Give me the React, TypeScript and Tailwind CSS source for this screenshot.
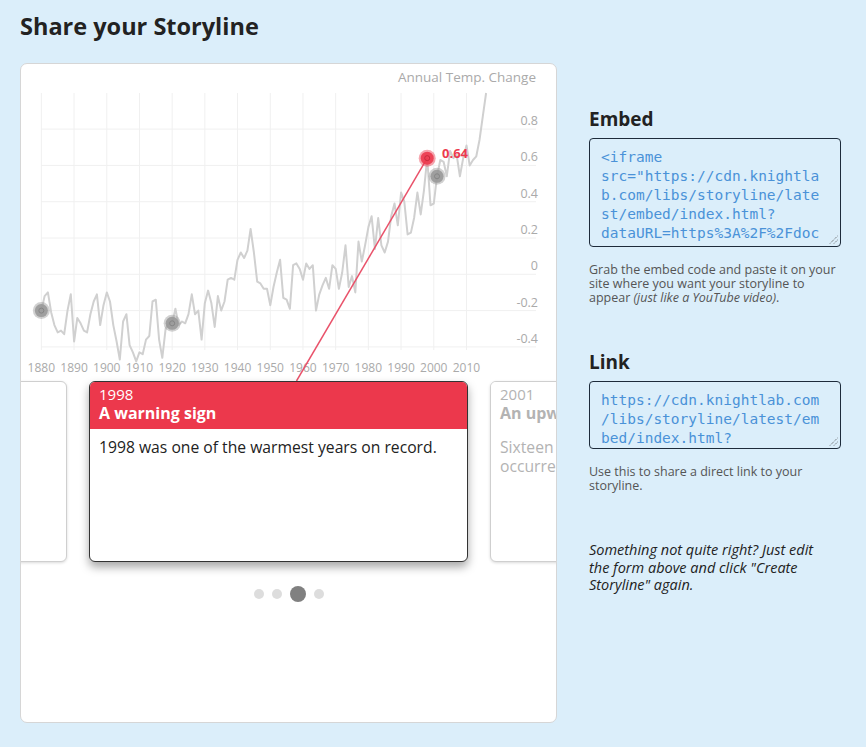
const temps = [
  -0.2, -0.12, -0.1, -0.21, -0.28, -0.32, -0.31, -0.33, -0.2, -0.11,
  -0.37, -0.24, -0.27, -0.31, -0.32, -0.22, -0.15, -0.11, -0.28, -0.17,
  -0.1, -0.15, -0.28, -0.37, -0.47, -0.26, -0.22, -0.39, -0.43, -0.48,
  -0.43, -0.44, -0.36, -0.34, -0.15, -0.14, -0.36, -0.46, -0.3, -0.27,
  -0.27, -0.19, -0.28, -0.26, -0.27, -0.22, -0.11, -0.22, -0.2, -0.36,
  -0.16, -0.09, -0.16, -0.29, -0.12, -0.2, -0.15, -0.03, -0.02, -0.03,
  0.08, 0.12, 0.09, 0.13, 0.25, 0.12, -0.04, -0.05, -0.08, -0.08,
  -0.17, -0.07, 0.01, 0.08, -0.13, -0.14, -0.19, 0.05, 0.06, 0.03,
  -0.03, 0.06, 0.03, 0.05, -0.2, -0.11, -0.06, -0.02, -0.08, 0.05,
  0.03, -0.08, 0.01, 0.16, -0.07, -0.01, -0.1, 0.18, 0.07, 0.16,
  0.26, 0.32, 0.14, 0.31, 0.16, 0.12, 0.18, 0.32, 0.39, 0.27,
  0.45, 0.4, 0.22, 0.23, 0.31, 0.45, 0.33, 0.46, 0.64, 0.38,
  0.39, 0.54, 0.63, 0.62, 0.54, 0.68, 0.64, 0.66, 0.54, 0.64,
  0.71, 0.6, 0.63, 0.65, 0.74, 0.87, 1.0,
];

// chart coords are in page pixels, shifted back by the panel origin
const X = (year: number) => 41.35 + (year - 1880) * 3.27;
const Y = (v: number) => 274.3 - v * 181.5;

const decades = [1880, 1890, 1900, 1910, 1920, 1930, 1940, 1950, 1960, 1970, 1980, 1990, 2000, 2010];
const ticks = [0.8, 0.6, 0.4, 0.2, 0, -0.2, -0.4];

function Marker({ x, y, red }: { x: number; y: number; red?: boolean }) {
  const c = red ? "#ec3a4e" : "#999999";
  return (
    <g>
      <circle cx={x} cy={y} r={8.5} fill={c} opacity={0.45} />
      <circle cx={x} cy={y} r={6.5} fill={c} opacity={0.9} />
      <circle cx={x} cy={y} r={2.5} fill="none" stroke={red ? "#c9293c" : "#858585"} strokeWidth={1} />
    </g>
  );
}

function Chart() {
  const pts = temps
    .map((v, i) => `${X(1880 + i).toFixed(1)},${Math.max(Y(v), 93).toFixed(1)}`)
    .join(" ");
  return (
    <svg width="535" height="317" className="block" style={{ fontFamily: "'Open Sans', sans-serif" }}>
      <g transform="translate(-21,-64)">
        {ticks.map((t) => (
          <line key={t} x1={41} x2={536} y1={Y(t)} y2={Y(t)} stroke="#f0f0f0" strokeWidth={1} />
        ))}
        {decades.map((d) => (
          <line key={d} x1={X(d)} x2={X(d)} y1={93} y2={350} stroke="#f0f0f0" strokeWidth={1} />
        ))}
        <text x={536} y={81.5} textAnchor="end" fontSize="13.5" fill="#aaaaaa">
          Annual Temp. Change
        </text>
        {ticks.map((t) => (
          <text key={t} x={538} y={Y(t) - 4} textAnchor="end" fontSize="12.5" fill="#aaaaaa">
            {t === 0 ? "0" : t.toFixed(1)}
          </text>
        ))}
        {decades.map((d) => (
          <text key={d} x={X(d)} y={371.5} textAnchor="middle" fontSize="12" fill="#aaaaaa">
            {d}
          </text>
        ))}
        <polyline points={pts} fill="none" stroke="#d0d0d0" strokeWidth={2} strokeLinejoin="round" />
        <Marker x={X(1880)} y={Y(-0.2)} />
        <Marker x={X(1920)} y={Y(-0.27)} />
        <Marker x={X(2001)} y={Y(0.54)} />
        <line x1={X(1998)} y1={Y(0.64)} x2={296.5} y2={381} stroke="#e9526a" strokeWidth={1.5} />
        <Marker x={X(1998)} y={Y(0.64)} red />
        <text x={442} y={158} fontSize="13" fontWeight="700" fill="#ec3a4e">
          0.64
        </text>
      </g>
    </svg>
  );
}

function Card({
  year,
  title,
  body,
  active,
}: {
  year?: string;
  title?: string;
  body?: string;
  active?: boolean;
}) {
  return (
    <div
      className={`w-[379px] h-[181px] shrink-0 rounded-[6px] bg-white overflow-hidden border ${
        active
          ? "border-[#333333] shadow-[0_5px_10px_rgba(0,0,0,0.35)]"
          : "border-[#cfcfcf] shadow-[0_1px_3px_rgba(0,0,0,0.15)]"
      }`}
    >
      {year && (
        <div
          className={`px-[9px] pt-[3px] pb-[6px] leading-[19px] ${
            active ? "bg-[#ec384c] text-white" : "bg-white text-[#b3b3b3]"
          }`}
        >
          <div className="text-[15px]">{year}</div>
          <div className="text-[16px] font-bold">{title}</div>
        </div>
      )}
      {body && (
        <p
          className={`px-[9px] pt-[9px] text-[15.7px] leading-[19px] ${
            active ? "text-[#222222]" : "text-[#b3b3b3]"
          }`}
        >
          {body}
        </p>
      )}
    </div>
  );
}

function CodeBox({ lines, h }: { lines: string[]; h: string }) {
  return (
    <div
      className={`relative w-[252px] ${h} overflow-hidden rounded-[4px] border border-[#1d2b3a] pl-[11px] pt-[9px] font-['DejaVu_Sans_Mono',monospace] text-[14.5px] leading-[19px] text-[#4a92d8] whitespace-pre`}
    >
      {lines.map((l) => (
        <div key={l}>{l}</div>
      ))}
      <svg width="9" height="9" className="absolute right-[2px] bottom-[2px]">
        <line x1="1" y1="8.5" x2="8.5" y2="1" stroke="#555" strokeWidth="1" strokeDasharray="1 1" />
        <line x1="5" y1="8.5" x2="8.5" y2="5" stroke="#555" strokeWidth="1" strokeDasharray="1 1" />
      </svg>
    </div>
  );
}

export default function App() {
  return (
    <div className="min-h-screen w-full bg-[#dbeefa] px-5 pt-[11px] font-['Open_Sans',sans-serif] text-[#222222]">
      <h1 className="text-[23.5px] font-bold leading-[30px] text-[#222222]">Share your Storyline</h1>

      <div className="mt-[22px] flex gap-[32px]">
        <div className="w-[537px] h-[660px] shrink-0 overflow-hidden rounded-[7px] border border-[#d6d6d6] bg-white">
          <Chart />
          <div className="flex gap-[22px] -ml-[333px]">
            <Card />
            <Card
              active
              year="1998"
              title="A warning sign"
              body="1998 was one of the warmest years on record."
            />
            <Card
              year="2001"
              title="An upward trend"
              body="Sixteen of the 17 warmest years on record have occurred since 2001."
            />
          </div>
          <div className="mt-[24px] flex items-center justify-center gap-2">
            <span className="h-[10px] w-[10px] rounded-full bg-[#dddddd]" />
            <span className="h-[10px] w-[10px] rounded-full bg-[#dddddd]" />
            <span className="h-[16px] w-[16px] rounded-full bg-[#808080]" />
            <span className="h-[10px] w-[10px] rounded-full bg-[#dddddd]" />
          </div>
        </div>

        <div className="w-[252px] pt-[44px]">
          <h2 className="text-[19px] font-bold leading-[24px]">Embed</h2>
          <div className="mt-[7px]">
            <CodeBox
              h="h-[109px]"
              lines={[
                "<iframe",
                'src="https://cdn.knightla',
                "b.com/libs/storyline/late",
                "st/embed/index.html?",
                "dataURL=https%3A%2F%2Fdoc",
              ]}
            />
          </div>
          <p className="mt-[16px] whitespace-nowrap text-[12.5px] leading-[14px] text-[#555555]">
            Grab the embed code and paste it on your
            <br />
            site where you want your storyline to
            <br />
            appear <em>(just like a YouTube video)</em>.
          </p>

          <h2 className="mt-[45px] text-[19px] font-bold leading-[24px]">Link</h2>
          <div className="mt-[7px]">
            <CodeBox
              h="h-[68px]"
              lines={[
                "https://cdn.knightlab.com",
                "/libs/storyline/latest/em",
                "bed/index.html?",
              ]}
            />
          </div>
          <p className="mt-[16px] whitespace-nowrap text-[12.5px] leading-[14px] text-[#555555]">
            Use this to share a direct link to your
            <br />
            storyline.
          </p>

          <p className="mt-[48px] whitespace-nowrap text-[14.5px] italic leading-[17.7px] text-[#222222]">
            Something not quite right? Just edit
            <br />
            the form above and click "Create
            <br />
            Storyline" again.
          </p>
        </div>
      </div>
    </div>
  );
}
